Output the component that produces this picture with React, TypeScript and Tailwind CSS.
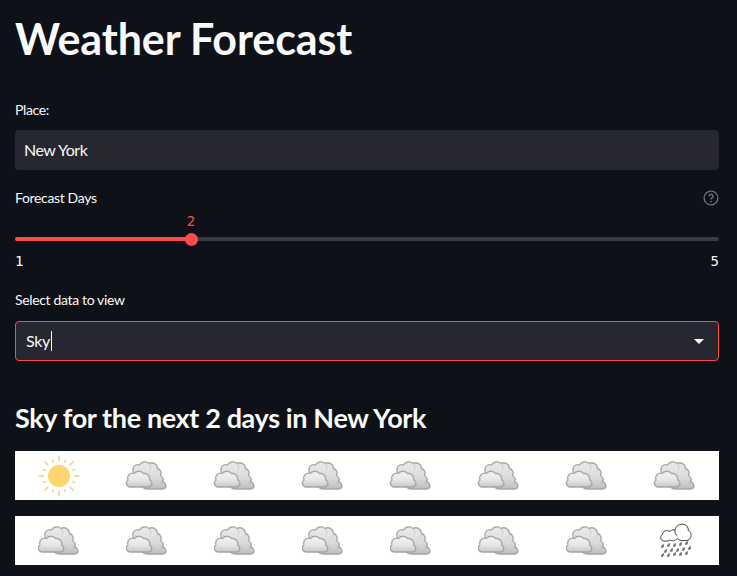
import { useId } from "react";

const font = { fontFamily: 'Lato, "Noto Sans", sans-serif' };
const mono = { fontFamily: '"DejaVu Sans Mono", monospace' };

function SunIcon() {
  const rays = [0, 45, 90, 135, 180, 225, 270, 315];
  const small = [22.5, 67.5, 112.5, 157.5, 202.5, 247.5, 292.5, 337.5];
  const line = (deg: number, r1: number, r2: number) => {
    const a = (deg * Math.PI) / 180;
    return (
      <line
        key={deg}
        x1={Math.cos(a) * r1}
        y1={Math.sin(a) * r1}
        x2={Math.cos(a) * r2}
        y2={Math.sin(a) * r2}
        stroke="#f0c35e"
        strokeWidth="1.2"
      />
    );
  };
  return (
    <svg width="42" height="42" viewBox="-21 -21 42 42">
      {rays.map((deg) => line(deg, 15, 20.5))}
      {small.map((deg) => line(deg, 14.5, 17.5))}
      <circle r="11" fill="#ffd56e" />
    </svg>
  );
}

function CloudIcon() {
  const id = useId();
  return (
    <svg width="44" height="31" viewBox="-0.5 -1 44 31">
      <defs>
        <linearGradient id={id} gradientUnits="userSpaceOnUse" x1="0" y1="11" x2="0" y2="26">
          <stop offset="0" stopColor="#f3f3f2" />
          <stop offset="0.55" stopColor="#e6e6e5" />
          <stop offset="1" stopColor="#c6c6c4" />
        </linearGradient>
        <linearGradient id={id + "b"} gradientUnits="userSpaceOnUse" x1="0" y1="1" x2="0" y2="28">
          <stop offset="0" stopColor="#ecebea" />
          <stop offset="0.6" stopColor="#dadad8" />
          <stop offset="1" stopColor="#bfbfbd" />
        </linearGradient>
      </defs>
      <path
        d="M8 12 C6 6 10 2.5 14 4 C16 0.5 21 0 23.5 2.5 C27 0.5 32 3 32 7.5 C35 8 36.5 12 35 15 C38 16 38.5 19 37 21 C40 21.5 41.5 25 39.5 27 Q38.5 28 36.5 28 L22 28 C18 28 16 26 16 22 Z"
        fill={`url(#${id}b)`}
        stroke="#a5a5a3"
        strokeWidth="1.3"
      />
      <path d="M23.5 2.5 C25 4 25.5 6 25 8 M32 7.5 C32 9 31.5 10.5 30.5 11.5" fill="none" stroke="#c8c8c6" strokeWidth="1" />
      <path
        d="M5 26 C1 26 -0.5 21 2.5 19 C1 14.5 5 11 9 12.5 C11 9.5 16 9.5 18 12.5 C22 12 25 15.5 24 19 C27 20 27.5 26 23 26 Z"
        fill={`url(#${id})`}
        stroke="#a5a5a3"
        strokeWidth="1.3"
      />
    </svg>
  );
}

function RainIcon() {
  const drops = [
    [3, 23], [9, 22], [15, 22], [21, 21], [27, 20],
    [6, 28], [12, 27], [18, 27], [24, 26], [30, 25],
    [3, 32], [9, 32], [15, 31], [21, 31], [27, 30],
  ];
  return (
    <svg width="33" height="35" viewBox="0 0 33 35">
      <path
        d="M5 18 C1.5 18 0.5 13 3.5 11.5 C3.5 8 8 6.5 11 8.5 C13 6.5 15 6.5 16 7 C17 2.5 21 0.8 24 1.2 C27.5 1.6 29.5 4 29.3 7.5 C32 8.5 32.8 12 31.5 14.5 C30.5 17 28 18 25 17.5 C22 18 20 17 18.5 15.5 C16 18 13 18.3 11 17 C9 18.3 7 18.3 5 18 Z"
        fill="#fff"
        stroke="#3f3f3f"
        strokeWidth="1"
      />
      <path d="M16 7 C15.5 10 17 12 18.5 13" fill="none" stroke="#3f3f3f" strokeWidth="1" />
      {drops.map(([x, y], i) => (
        <path
          key={i}
          d={`M${x + 1.6} ${y - 2.2} C${x + 2.4} ${y} ${x + 2} ${y + 2} ${x} ${y + 2} C${x - 1.8} ${y + 2} ${x - 1.4} ${y} ${x + 1.6} ${y - 2.2} Z`}
          fill="#767676"
        />
      ))}
    </svg>
  );
}

function Row({ icons }: { icons: string[] }) {
  return (
    <div className="grid h-[49px] grid-cols-8 bg-white">
      {icons.map((icon, i) => (
        <div key={i} className="flex items-center justify-center">
          {icon === "sun" && <SunIcon />}
          {icon === "cloud" && <CloudIcon />}
          {icon === "rain" && <RainIcon />}
        </div>
      ))}
    </div>
  );
}

export default function App() {
  return (
    <div className="h-[576px] overflow-hidden bg-[#0e1117] pr-[18px] pl-[15px] text-[#fafafa]" style={font}>
      <h1 className="pt-[9px] text-[43px] leading-[60px] font-bold tracking-[-0.1px] whitespace-nowrap">
        Weather Forecast
      </h1>

      <label className="mt-[31px] block text-[14px] leading-[20px] tracking-[-0.35px]">Place:</label>
      <div className="mt-[10px]">
        <input
          readOnly
          value="New York"
          className="block h-10 w-full rounded bg-[#262730] px-[9px] pb-[2px] text-[16px] tracking-[-0.5px] text-[#fafafa] outline-none"
        />
      </div>

      <div className="mt-[18px] flex items-center justify-between">
        <span className="text-[14px] leading-[20px] tracking-[-0.35px]">Forecast Days</span>
        <svg width="16" height="16" viewBox="0 0 16 16" fill="none">
          <circle cx="8" cy="8" r="6.9" stroke="#6f7075" strokeWidth="1.4" />
          <path d="M6 6.3 C6 3.9 10 3.9 10 6.3 C10 7.8 8 7.9 8 9.5" stroke="#6f7075" strokeWidth="1.4" />
          <circle cx="8" cy="11.6" r="0.9" fill="#6f7075" />
        </svg>
      </div>

      <div className="relative mt-[29px] h-1 rounded-full bg-[#3a3b42]">
        <div className="h-1 w-1/4 rounded-full bg-[#ff4b4b]" />
        <div className="absolute top-[-4.5px] left-1/4 -ml-[6.5px] h-[13px] w-[13px] rounded-full bg-[#ff4b4b]" />
        <span
          className="absolute top-[-25px] left-1/4 -translate-x-1/2 text-[14px] leading-[18px] text-[#ff4b4b]"
          style={mono}
        >
          2
        </span>
      </div>
      <div className="mt-[11px] flex justify-between text-[14px] leading-[18px]" style={mono}>
        <span>1</span>
        <span>5</span>
      </div>

      <label className="mt-[20px] block text-[14px] leading-[20px] tracking-[-0.35px]">Select data to view</label>
      <div className="mt-[11px] flex h-10 items-center justify-between rounded border border-[#ff4b4b] bg-[#262730] pr-[14px] pl-[10px]">
        <span className="flex items-center text-[16px] tracking-[-0.3px]">
          Sky
          <span className="ml-px h-[20px] w-px bg-[#fafafa]" />
        </span>
        <span className="h-0 w-0 border-x-[5px] border-t-[5px] border-x-transparent border-t-[#fafafa]" />
      </div>

      <h2 className="mt-[37px] text-[27px] leading-[40px] font-bold tracking-[-0.37px] whitespace-nowrap">
        Sky for the next 2 days in New York
      </h2>

      <div className="mt-[13px] flex flex-col gap-4">
        <Row icons={["sun", "cloud", "cloud", "cloud", "cloud", "cloud", "cloud", "cloud"]} />
        <Row icons={["cloud", "cloud", "cloud", "cloud", "cloud", "cloud", "cloud", "rain"]} />
      </div>
    </div>
  );
}
